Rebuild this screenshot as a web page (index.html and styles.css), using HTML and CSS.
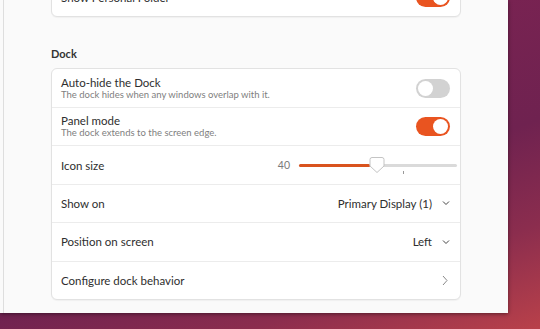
FILE: index.html
```html
<!DOCTYPE html>
<html>
    <head>
        <meta charset="UTF-8">
        <title>Ubuntu Desktop</title>
        <link rel="stylesheet" href="styles.css">
    </head>
    <body>
        <div class="window">
            <div class="sideedge"></div>
            <div class="content">
                <div class="card topcard">
                    <div class="row">
                        <div class="label"><div class="title">Show Personal Folder</div></div>
                        <div class="switch on"><span class="knob"></span></div>
                    </div>
                </div>

                <h2 class="grouptitle">Dock</h2>

                <div class="card">
                    <div class="row">
                        <div class="label">
                            <div class="title">Auto-hide the Dock</div>
                            <div class="sub">The dock hides when any windows overlap with it.</div>
                        </div>
                        <div class="switch"><span class="knob"></span></div>
                    </div>
                    <div class="row">
                        <div class="label">
                            <div class="title">Panel mode</div>
                            <div class="sub">The dock extends to the screen edge.</div>
                        </div>
                        <div class="switch on"><span class="knob"></span></div>
                    </div>
                    <div class="row">
                        <div class="label"><div class="title">Icon size</div></div>
                        <div class="slider">
                            <span class="value">40</span>
                            <div class="track">
                                <div class="fill" style="width: 45%"></div>
                                <svg class="thumb" width="16" height="18" viewBox="0 0 16 18">
                                    <path d="M3 1.5 H13 A2 2 0 0 1 15 3.5 V10 L8 16.5 L1 10 V3.5 A2 2 0 0 1 3 1.5 Z" fill="#fff" stroke="#c4c4c4" stroke-width="1"/>
                                </svg>
                                <span class="tick"></span>
                            </div>
                        </div>
                    </div>
                    <div class="row">
                        <div class="label"><div class="title">Show on</div></div>
                        <div class="combo">
                            <span>Primary Display (1)</span>
                            <svg width="8" height="6" viewBox="0 0 8 6"><path d="M1 1.5 L4 4.5 L7 1.5" fill="none" stroke="#444" stroke-width="1"/></svg>
                        </div>
                    </div>
                    <div class="row">
                        <div class="label"><div class="title">Position on screen</div></div>
                        <div class="combo">
                            <span>Left</span>
                            <svg width="8" height="6" viewBox="0 0 8 6"><path d="M1 1.5 L4 4.5 L7 1.5" fill="none" stroke="#444" stroke-width="1"/></svg>
                        </div>
                    </div>
                    <div class="row">
                        <div class="label"><div class="title">Configure dock behavior</div></div>
                        <svg class="arrow" width="6" height="11" viewBox="0 0 6 11"><path d="M1 1 L5 5.5 L1 10" fill="none" stroke="#888" stroke-width="1"/></svg>
                    </div>
                </div>
            </div>
        </div>
    </body>
</html>
```

FILE: styles.css
```css
*{
    box-sizing: border-box;
}
body{
    margin: 0;
    width: 540px;
    height: 329px;
    overflow: hidden;
    font-family: "Lato", "Noto Sans", sans-serif;
    color: #303030;
    background: linear-gradient(160deg, #8c2f5a 0%, #7a2352 30%, #6f2250 60%, #8b2d4e 80%, #b9414a 100%);
}
.window{
    display: flex;
    width: 508px;
    height: 313px;
    background-color: #fafafa;
    box-shadow: 0 1px 4px rgba(0, 0, 0, 0.45);
    overflow: hidden;
}
.sideedge{
    width: 4px;
    border-right: solid 1px #dedede;
}
.content{
    flex: 1;
    padding-left: 47px;
    padding-right: 47px;
}
.card{
    background-color: #fff;
    border: solid 1px #e2e2e2;
    border-radius: 6px;
    box-shadow: 0 1px 1px rgba(0, 0, 0, 0.04);
}
.topcard{
    margin-top: -23px;
}
.grouptitle{
    margin: 29px 0 6px 0;
    font-size: 11px;
    font-weight: 700;
    line-height: 16px;
    color: #333;
}
.row{
    display: flex;
    align-items: center;
    justify-content: space-between;
    height: 38.4px;
    padding: 0 10px 0 9px;
    border-top: solid 1px #ececec;
}
.row:first-child{
    border-top: none;
    height: 38px;
}
.title{
    font-size: 11.5px;
    line-height: 13px;
    color: #2e2e2e;
}
.sub{
    font-size: 9.5px;
    line-height: 12px;
    color: #808080;
}
.switch{
    position: relative;
    width: 34px;
    height: 19px;
    border-radius: 10px;
    background-color: #d2d2d2;
}
.switch .knob{
    position: absolute;
    top: 2px;
    left: 2px;
    width: 15px;
    height: 15px;
    border-radius: 50%;
    background-color: #fff;
}
.switch.on{
    background-color: #e95420;
}
.switch.on .knob{
    left: 17px;
}
.slider{
    display: flex;
    align-items: center;
    gap: 9px;
    margin-right: -7px;
}
.value{
    font-size: 10.5px;
    color: #7a7a7a;
}
.track{
    position: relative;
    width: 158px;
    height: 3px;
    border-radius: 2px;
    background-color: #dadada;
}
.fill{
    height: 3px;
    border-radius: 2px;
    background-color: #d9531e;
}
.thumb{
    position: absolute;
    left: 70px;
    top: -8px;
}
.tick{
    position: absolute;
    left: 104px;
    top: 7px;
    width: 1px;
    height: 3px;
    background-color: #999;
}
.combo{
    display: flex;
    align-items: center;
    gap: 10px;
    font-size: 11.5px;
    color: #2e2e2e;
}
.arrow{
    margin-right: 2px;
}
```
